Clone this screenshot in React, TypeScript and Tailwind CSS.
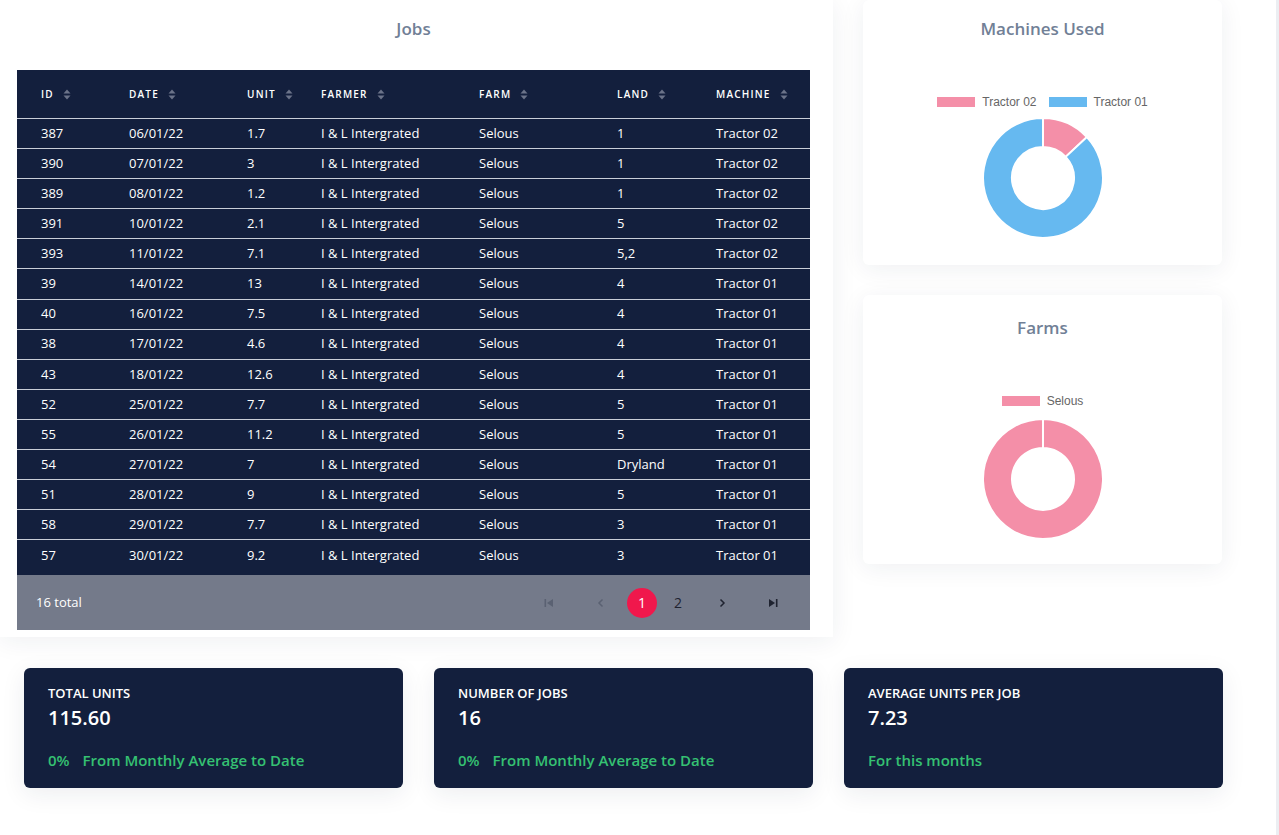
import React from "react"

type Job = {
  id: string
  date: string
  unit: string
  farmer: string
  farm: string
  land: string
  machine: string
}

const jobs: Job[] = [
  ["387", "06/01/22", "1.7", "1", "Tractor 02"],
  ["390", "07/01/22", "3", "1", "Tractor 02"],
  ["389", "08/01/22", "1.2", "1", "Tractor 02"],
  ["391", "10/01/22", "2.1", "5", "Tractor 02"],
  ["393", "11/01/22", "7.1", "5,2", "Tractor 02"],
  ["39", "14/01/22", "13", "4", "Tractor 01"],
  ["40", "16/01/22", "7.5", "4", "Tractor 01"],
  ["38", "17/01/22", "4.6", "4", "Tractor 01"],
  ["43", "18/01/22", "12.6", "4", "Tractor 01"],
  ["52", "25/01/22", "7.7", "5", "Tractor 01"],
  ["55", "26/01/22", "11.2", "5", "Tractor 01"],
  ["54", "27/01/22", "7", "Dryland", "Tractor 01"],
  ["51", "28/01/22", "9", "5", "Tractor 01"],
  ["58", "29/01/22", "7.7", "3", "Tractor 01"],
  ["57", "30/01/22", "9.2", "3", "Tractor 01"],
].map(([id, date, unit, land, machine]) => ({
  id,
  date,
  unit,
  farmer: "I & L Intergrated",
  farm: "Selous",
  land,
  machine,
}))

const columns: { key: keyof Job; label: string; w: string }[] = [
  { key: "id", label: "ID", w: "w-[88px]" },
  { key: "date", label: "DATE", w: "w-[118px]" },
  { key: "unit", label: "UNIT", w: "w-[74px]" },
  { key: "farmer", label: "FARMER", w: "w-[158px]" },
  { key: "farm", label: "FARM", w: "w-[138px]" },
  { key: "land", label: "LAND", w: "w-[99px]" },
  { key: "machine", label: "MACHINE", w: "w-[118px]" },
]

const FONT = "font-['Open_Sans',_'Noto_Sans',_sans-serif]"

function SortIcon() {
  return (
    <svg width="8" height="11" viewBox="0 0 8 11" className="ml-[9px]">
      <path d="M4 0.5 L7.5 4.5 H0.5 Z" fill="#6b7389" />
      <path d="M4 10.5 L7.5 6.5 H0.5 Z" fill="#6b7389" />
    </svg>
  )
}

// slice path, angles in degrees clockwise from 12 o'clock
function slice(cx: number, cy: number, r: number, ir: number, a0: number, a1: number) {
  const p = (rad: number, a: number) => {
    const t = ((a - 90) * Math.PI) / 180
    return `${cx + rad * Math.cos(t)} ${cy + rad * Math.sin(t)}`
  }
  const large = a1 - a0 > 180 ? 1 : 0
  return `M ${p(r, a0)} A ${r} ${r} 0 ${large} 1 ${p(r, a1)} L ${p(ir, a1)} A ${ir} ${ir} 0 ${large} 0 ${p(ir, a0)} Z`
}

function Donut({ parts }: { parts: { value: number; color: string }[] }) {
  const total = parts.reduce((s, p) => s + p.value, 0)
  let acc = 0
  return (
    <svg width="124" height="124" viewBox="0 0 124 124">
      {parts.map((p, i) => {
        const a0 = (acc / total) * 360
        acc += p.value
        const a1 = Math.min((acc / total) * 360, 359.99)
        return (
          <path
            key={i}
            d={slice(62, 62, 60, 31, a0, a1)}
            fill={p.color}
            stroke="#fff"
            strokeWidth="2"
          />
        )
      })}
    </svg>
  )
}

function Legend({ items }: { items: { label: string; color: string }[] }) {
  return (
    <div className="flex items-center justify-center gap-[12px] font-['Liberation_Sans',_Arial,_sans-serif] text-[12px] text-[#666]">
      {items.map((it) => (
        <div key={it.label} className="flex items-center gap-[7px]">
          <span className="inline-block h-[10px] w-[38px]" style={{ background: it.color }} />
          <span>{it.label}</span>
        </div>
      ))}
    </div>
  )
}

function ChartCard({
  title,
  className,
  legend,
  parts,
  legendGap,
  donutGap,
}: {
  title: string
  className: string
  legend: { label: string; color: string }[]
  parts: { value: number; color: string }[]
  legendGap: string
  donutGap: string
}) {
  return (
    <div
      className={`flex flex-col items-center rounded-[6px] bg-white shadow-[0_4px_24px_rgba(30,40,70,0.07)] ${className}`}
    >
      <h2 className={`${FONT} text-[17px] font-semibold leading-[24px] text-[#718096]`}>{title}</h2>
      <div className={legendGap}>
        <Legend items={legend} />
      </div>
      <div className={donutGap}>
        <Donut parts={parts} />
      </div>
    </div>
  )
}

function Stat({ label, value, note }: { label: string; value: string; note: React.ReactNode }) {
  return (
    <div className="h-[120px] w-[379px] rounded-[6px] bg-[#131f3d] pl-[24px] pt-[16px] shadow-[0_6px_24px_rgba(30,40,70,0.08)]">
      <div className={`${FONT} text-[13px] font-semibold leading-[18px] text-white`}>{label}</div>
      <div className={`${FONT} mt-[3px] text-[20px] font-semibold leading-[26px] text-white`}>{value}</div>
      <div className={`${FONT} mt-[18px] text-[15px] font-semibold leading-[22px] text-[#35c172]`}>{note}</div>
    </div>
  )
}

function FirstIcon({ color }: { color: string }) {
  return (
    <svg width="12" height="12" viewBox="0 0 12 12">
      <rect x="1.5" y="2" width="1.6" height="8" fill={color} />
      <path d="M10 2 L4 6 L10 10 Z" fill={color} />
    </svg>
  )
}

function LastIcon({ color }: { color: string }) {
  return (
    <svg width="12" height="12" viewBox="0 0 12 12">
      <path d="M2 2 L8 6 L2 10 Z" fill={color} />
      <rect x="8.9" y="2" width="1.6" height="8" fill={color} />
    </svg>
  )
}

function Chevron({ dir, color }: { dir: "l" | "r"; color: string }) {
  return (
    <svg width="12" height="12" viewBox="0 0 12 12">
      <path
        d={dir === "l" ? "M7.5 2.5 L4 6 L7.5 9.5" : "M4.5 2.5 L8 6 L4.5 9.5"}
        fill="none"
        stroke={color}
        strokeWidth="1.5"
      />
    </svg>
  )
}

export default function App() {
  const pink = "#f48fa8"
  const blue = "#66b9f0"

  return (
    <div className={`relative h-[835px] w-[1279px] overflow-hidden bg-white ${FONT}`}>
      <div className="flex">
        {/* jobs table */}
        <div className="h-[637px] w-[833px] bg-white pl-[17px] pt-[17px] shadow-[0_4px_24px_rgba(30,40,70,0.07)]">
          <h2 className="w-[793px] text-center text-[17px] font-semibold leading-[24px] text-[#718096]">
            Jobs
          </h2>
          <div className="mt-[29px] w-[793px] bg-[#131f3d]">
            <div className="flex h-[49px] items-center border-b border-[#c9ced8]">
              {columns.map((c) => (
                <div
                  key={c.key}
                  className={`${c.w} flex items-center pl-[24px] text-[10px] font-semibold tracking-[0.12em] text-white`}
                >
                  {c.label}
                  <SortIcon />
                </div>
              ))}
            </div>
            {jobs.map((j, i) => (
              <div
                key={j.id + i}
                className={`flex h-[30.1px] items-center ${i < jobs.length - 1 ? "border-b border-[#c9ced8]" : ""}`}
              >
                {columns.map((c) => (
                  <div key={c.key} className={`${c.w} pl-[24px] text-[13px] text-white`}>
                    {j[c.key]}
                  </div>
                ))}
              </div>
            ))}
            <div className="h-[5px]" />
            <div className="flex h-[55px] items-center justify-between bg-[#747a8a] pl-[19px] pr-[9px]">
              <span className="text-[13px] text-white">16 total</span>
              <div className="flex items-center">
                <span className="flex w-[52px] justify-center">
                  <FirstIcon color="#5a6172" />
                </span>
                <span className="flex w-[52px] justify-center">
                  <Chevron dir="l" color="#5a6172" />
                </span>
                <span className="flex h-[30px] w-[30px] items-center justify-center rounded-full bg-[#f0184c] text-[14px] text-white">
                  1
                </span>
                <span className="flex w-[42px] justify-center text-[14px] text-[#1f2330]">2</span>
                <span className="flex w-[46px] justify-center">
                  <Chevron dir="r" color="#1f2330" />
                </span>
                <span className="flex w-[56px] justify-center">
                  <LastIcon color="#1f2330" />
                </span>
              </div>
            </div>
          </div>
        </div>

        {/* charts */}
        <div className="ml-[30px] flex w-[359px] flex-col gap-[30px]">
          <ChartCard
            title="Machines Used"
            className="h-[265px] pt-[17px]"
            legendGap="mt-[52px]"
            donutGap="mt-[5px]"
            legend={[
              { label: "Tractor 02", color: pink },
              { label: "Tractor 01", color: blue },
            ]}
            parts={[
              { value: 15.1, color: pink },
              { value: 100.5, color: blue },
            ]}
          />
          <ChartCard
            title="Farms"
            className="h-[269px] pt-[21px]"
            legendGap="mt-[52px]"
            donutGap="mt-[7px]"
            legend={[{ label: "Selous", color: pink }]}
            parts={[{ value: 1, color: pink }]}
          />
        </div>
      </div>

      {/* stats */}
      <div className="mt-[31px] flex gap-[31px] pl-[24px]">
        <Stat
          label="TOTAL UNITS"
          value="115.60"
          note={
            <>
              0%<span className="ml-[13px]">From Monthly Average to Date</span>
            </>
          }
        />
        <Stat
          label="NUMBER OF JOBS"
          value="16"
          note={
            <>
              0%<span className="ml-[13px]">From Monthly Average to Date</span>
            </>
          }
        />
        <Stat label="AVERAGE UNITS PER JOB" value="7.23" note="For this months" />
      </div>

      <div className="absolute right-0 top-0 h-full w-[3px] bg-[#eceef2]" />
    </div>
  )
}
